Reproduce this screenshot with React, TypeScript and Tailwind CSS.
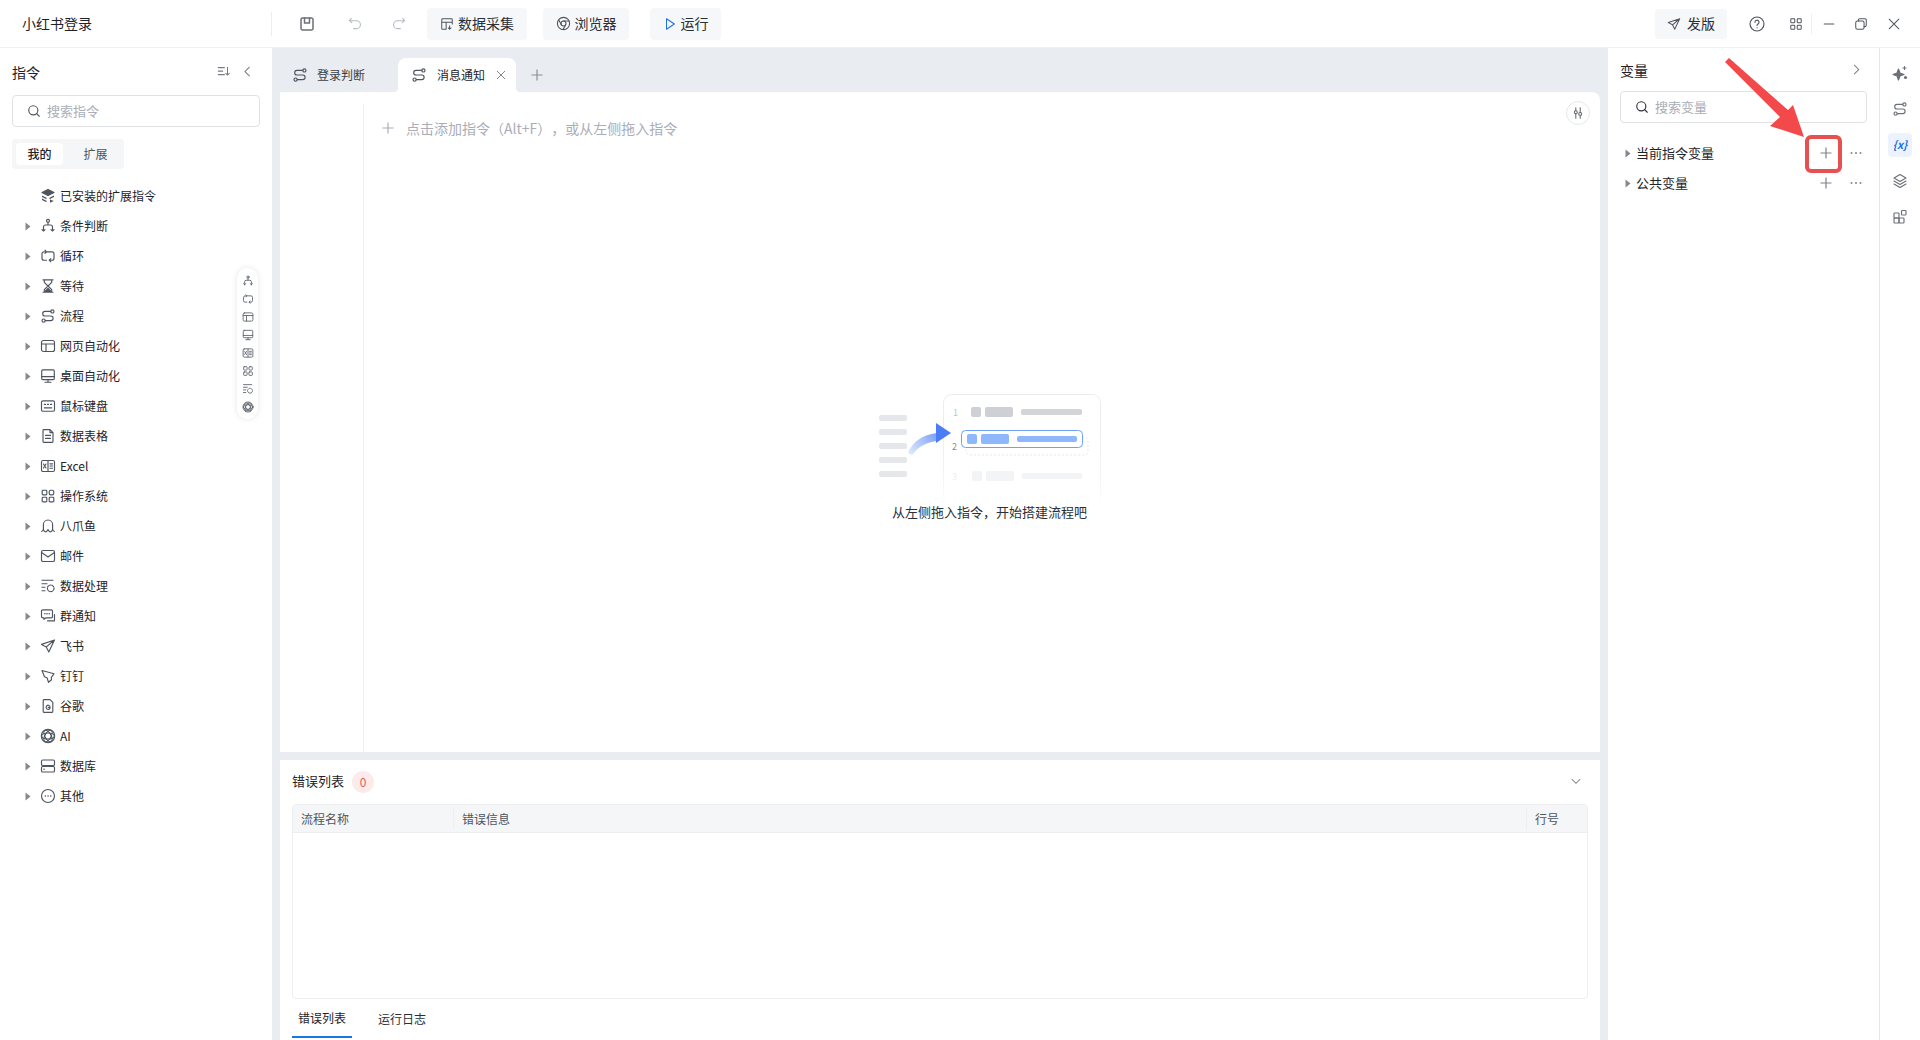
import React from "react";

const Ic = ({ children, s = 16, c = "" }: { children: React.ReactNode; s?: number; c?: string }) => (
  <svg width={s} height={s} viewBox="0 0 16 16" fill="none" stroke="currentColor" strokeWidth={1.15} strokeLinecap="round" strokeLinejoin="round" className={c}>
    {children}
  </svg>
);

const Branch = (p: { s?: number }) => (
  <Ic {...p}><circle cx="8" cy="2.800" r="1.500" /><path d="M8 4.300V7M3.500 13V9a2 2 0 0 1 2-2h5a2 2 0 0 1 2 2v4M2 11.600 3.500 13 5 11.600M11 11.600l1.500 1.400 1.500-1.400" /></Ic>
);
const Loop = (p: { s?: number }) => (
  <Ic {...p}><path d="M5 3.800h7a2 2 0 0 1 2 2v4.400a2 2 0 0 1-2 2h-2M6.500 12.200H4a2 2 0 0 1-2-2V5.800a2 2 0 0 1 2-2M10.800 10.600 9.200 12.200l1.600 1.600M5 2.200l1.600 1.600L5 5.400" /></Ic>
);
const Hourglass = (p: { s?: number }) => (
  <Ic {...p}><path d="M3 1.800h10M3 14.200h10M4.300 1.800v2.600L8 8l3.700 3.600v2.600M11.700 1.800v2.600L8 8l-3.700 3.600v2.600" /><path d="M5 13.500 8 10.500l3 3z" fill="currentColor" /></Ic>
);
const Route = (p: { s?: number }) => (
  <Ic {...p}><circle cx="3.600" cy="12.600" r="1.600" /><circle cx="12.400" cy="3.400" r="1.600" /><path d="M5.200 12.600h5.600a2.300 2.300 0 0 0 0-4.600H5a2.300 2.300 0 0 1 0-4.600h5.800" /></Ic>
);
const Web = (p: { s?: number }) => (
  <Ic {...p}><rect x="1.500" y="2.500" width="13" height="11" rx="2" /><path d="M1.500 6h13M6 6v7.500" /></Ic>
);
const Desktop = (p: { s?: number }) => (
  <Ic {...p}><rect x="1.700" y="1.800" width="12.600" height="9.800" rx="1.200" /><path d="M1.700 8.600h12.600M8 11.600v2.600M5 14.200h6" /></Ic>
);
const Keyboard = (p: { s?: number }) => (
  <Ic {...p}><rect x="1.500" y="2.800" width="13" height="10.400" rx="1.500" /><path d="M4.300 6.400h1.200M7.400 6.400h1.200M10.500 6.400h1.200M4.300 9.800h7.400" /></Ic>
);
const Doc = (p: { s?: number }) => (
  <Ic {...p}><path d="M3 2.400a.8.800 0 0 1 .8-.8H10l3 3v9a.8.800 0 0 1-.8.8H3.800a.8.800 0 0 1-.8-.8zM10 1.600v3h3M5.500 7.400h5M5.500 10.400h5" /></Ic>
);
const ExcelI = (p: { s?: number }) => (
  <Ic {...p}><rect x="1.500" y="2.500" width="13" height="11" rx="1.500" /><path d="M8 2.500v11M10 5.800h2.500M10 8h2.500M10 10.200h2.500M3.500 6l2.500 4M6 6l-2.500 4" /></Ic>
);
const Grid = (p: { s?: number }) => (
  <Ic {...p}><rect x="2.200" y="2.200" width="4.600" height="4.600" rx=".8" /><rect x="9.200" y="2.200" width="4.600" height="4.600" rx="1.600" /><rect x="2.200" y="9.200" width="4.600" height="4.600" rx=".8" /><rect x="9.200" y="9.200" width="4.600" height="4.600" rx=".8" /></Ic>
);
const Octopus = (p: { s?: number }) => (
  <Ic {...p}><path d="M3.400 11V6.600a4.600 4.600 0 0 1 9.200 0V11M1.500 13.500c1 0 1.600-.9 1.900-2.500.3 1.600 1 2.800 2.200 2.800S7.500 12.700 8 11.500c.5 1.200 1.200 2.300 2.400 2.300s1.900-1.200 2.200-2.800c.3 1.600.9 2.500 1.900 2.500" /></Ic>
);
const Mail = (p: { s?: number }) => (
  <Ic {...p}><rect x="1.500" y="2.500" width="13" height="11" rx="1.600" /><path d="M2 4.800 8 9l6-4.200" /></Ic>
);
const DataProc = (p: { s?: number }) => (
  <Ic {...p}><path d="M2 2.200h11M2 5.700h5M2 9.200h3M2 12.700h3" /><circle cx="10.700" cy="10.300" r="3.300" strokeDasharray="1.700 1.100" /></Ic>
);
const Chat = (p: { s?: number }) => (
  <Ic {...p}><path d="M2.800 1.800h8.400a1.300 1.300 0 0 1 1.300 1.300v5.400a1.300 1.300 0 0 1-1.300 1.300H6L4 11.400V9.800H2.800a1.300 1.300 0 0 1-1.300-1.300V3.100a1.300 1.300 0 0 1 1.300-1.300zM14.500 6.500v6.300H7.500" /><path d="M4.800 5.800h.1M7 5.800h.1M9.200 5.800h.1" strokeWidth="1.500" /></Ic>
);
const Send = (p: { s?: number }) => (
  <Ic {...p}><path d="M14.500 2 1.500 6.400l4.800 2.500 2.500 5.100zM6.300 8.900 14.500 2" /></Ic>
);
const Ding = (p: { s?: number }) => (
  <Ic {...p}><path d="M2 2.500 14 5.800l-2.700 3.500.2 2.500-3 2.500-1.500-4.500L4.500 8.700z" /></Ic>
);
const Google = (p: { s?: number }) => (
  <Ic {...p}><path d="M3.200 2.400a.8.800 0 0 1 .8-.8h6l2.800 2.800v9.200a.8.800 0 0 1-.8.8H4a.8.800 0 0 1-.8-.8z" /><path d="M10 8.200a2.100 2.100 0 1 0 0 2.200V9.300H8.300" /></Ic>
);
const AI = (p: { s?: number }) => (
  <Ic {...p}><circle cx="8" cy="8" r="6.700" /><ellipse cx="8" cy="8" rx="6.300" ry="3" /><ellipse cx="8" cy="8" rx="6.300" ry="3" transform="rotate(60 8 8)" /><ellipse cx="8" cy="8" rx="6.300" ry="3" transform="rotate(120 8 8)" /></Ic>
);
const DB = (p: { s?: number }) => (
  <Ic {...p}><rect x="1.500" y="2" width="13" height="5.500" rx="1.300" /><rect x="1.500" y="8.500" width="13" height="5.500" rx="1.300" /><path d="M4 11.200h.1" strokeWidth="1.500" /></Ic>
);
const Other = (p: { s?: number }) => (
  <Ic {...p}><circle cx="8" cy="8" r="6.500" /><path d="M5.300 8h.1M8 8h.1M10.700 8h.1" strokeWidth="1.500" /></Ic>
);
const Stack = (p: { s?: number }) => (
  <Ic {...p}><path d="M8 1.500 14 4.500 8 7.500 2 4.500z" fill="currentColor" /><path d="M2 7.500l4.500 2.200v1.500L2 9zM14 7.500 9.500 9.700v1.500L14 9zM2 10.500l4.500 2.200v1.500L2 12zM10 11.500l3.800 1.500L10 14.700z" fill="currentColor" stroke="none" /></Ic>
);
const Search = () => (
  <Ic s={14}><circle cx="7.200" cy="7.200" r="5.200" strokeWidth="1.300" /><path d="m11 11 3 3" strokeWidth="1.300" /></Ic>
);
const Caret = () => (
  <svg width="6" height="9" viewBox="0 0 6 9" className="shrink-0"><path d="M0.500 0.500 5.500 4.500 0.500 8.500z" fill="#85898f" /></svg>
);
const Plus = ({ c = "#7d828b", s = 12 }: { c?: string; s?: number }) => (
  <svg width={s} height={s} viewBox="0 0 12 12" stroke={c} strokeWidth="1.200" fill="none"><path d="M6 .5v11M.5 6h11" /></svg>
);
const Dots = () => (
  <svg width="12" height="4" viewBox="0 0 12 4" fill="#80858e"><circle cx="1.500" cy="2" r="1" /><circle cx="6" cy="2" r="1" /><circle cx="10.500" cy="2" r="1" /></svg>
);

const rows: [string, (p: { s?: number }) => React.ReactElement][] = [
  ["条件判断", Branch], ["循环", Loop], ["等待", Hourglass], ["流程", Route], ["网页自动化", Web], ["桌面自动化", Desktop],
  ["鼠标键盘", Keyboard], ["数据表格", Doc], ["Excel", ExcelI], ["操作系统", Grid], ["八爪鱼", Octopus], ["邮件", Mail],
  ["数据处理", DataProc], ["群通知", Chat], ["飞书", Send], ["钉钉", Ding], ["谷歌", Google], ["AI", AI], ["数据库", DB], ["其他", Other],
];

const ToolBtn = ({ children, w }: { children: React.ReactNode; w: string }) => (
  <button className={`h-8 ${w} rounded bg-[#f6f7f9] flex items-center justify-center gap-1 text-sm text-[#2b2f36]`}>{children}</button>
);

function Illustration() {
  return (
    <svg width="226" height="112" viewBox="876 392 226 112" className="block">
      <defs>
        <linearGradient id="cardFade" x1="0" y1="0" x2="0" y2="1">
          <stop offset="0" stopColor="#e9ebee" />
          <stop offset="0.7" stopColor="#f1f2f4" />
          <stop offset="1" stopColor="#ffffff" />
        </linearGradient>
        <linearGradient id="arrowFade" x1="908" y1="452" x2="940" y2="432" gradientUnits="userSpaceOnUse">
          <stop offset="0" stopColor="#dfe9fd" />
          <stop offset="1" stopColor="#6f98f6" />
        </linearGradient>
      </defs>
      {[415, 429, 443, 457, 471].map((y) => (
        <rect key={y} x="879" y={y} width="28" height="6" rx="2" fill="#e6e7ea" />
      ))}
      <rect x="943.500" y="394.500" width="157" height="112" rx="8" fill="#fff" stroke="url(#cardFade)" />
      <text x="953" y="416" fontSize="9" fill="#c3c6cc">1</text>
      <rect x="971" y="407" width="10" height="10" rx="2" fill="#ced0d5" />
      <rect x="985" y="407" width="28" height="10" rx="2" fill="#ced0d5" />
      <rect x="1021" y="409" width="61" height="6" rx="2" fill="#d2d4d8" />
      <rect x="966" y="437" width="122" height="18" rx="4" fill="none" stroke="#e3e5e9" strokeDasharray="2 2" />
      <text x="952" y="450" fontSize="9" fill="#8a8e96">2</text>
      <rect x="961.500" y="430.500" width="121" height="17" rx="4" fill="#fff" stroke="#6ea1f7" />
      <rect x="967" y="434" width="10" height="10" rx="2" fill="#8fb7fb" />
      <rect x="981" y="434" width="28" height="10" rx="2" fill="#8fb7fb" />
      <rect x="1017" y="436" width="60" height="6" rx="2" fill="#8fb7fb" />
      <text x="952" y="480" fontSize="9" fill="#eceef0">3</text>
      <rect x="972" y="471" width="10" height="10" rx="2" fill="#f3f4f5" />
      <rect x="986" y="471" width="28" height="10" rx="2" fill="#f3f4f5" />
      <rect x="1022" y="473" width="60" height="6" rx="2" fill="#f3f4f5" />
      <path d="M908 453c4-10 13-18 29-20l1 8c-12 1-20 6-26 14z" fill="url(#arrowFade)" />
      <path d="M936 423 951 433 936 443z" fill="#4a7cf5" />
    </svg>
  );
}

export default function App() {
  return (
    <div className="relative w-[1920px] h-[1040px] overflow-hidden flex flex-col bg-[#e9ecf0] text-[#1f2329] [text-spacing-trim:space-all] font-['Noto_Sans_CJK_SC','Noto_Sans',sans-serif]">
      {/* top bar */}
      <header className="h-12 shrink-0 bg-white border-b border-[#eef0f2] flex items-center">
        <div className="w-[272px] h-6 shrink-0 border-r border-[#eceef1] pl-[22px] text-sm leading-[22px]">小红书登录</div>
        <span className="ml-[27px] text-[#6b6f76]"><Ic s={16}><path d="M3.500 2h9A1.500 1.500 0 0 1 14 3.500v9a1.500 1.500 0 0 1-1.500 1.500h-9A1.500 1.500 0 0 1 2 12.500v-9A1.500 1.500 0 0 1 3.500 2z" strokeWidth="1.500" /><path d="M5.500 2v5h5V2" strokeWidth="1.500" /></Ic></span>
        <span className="ml-[33px] text-[#b7bbc2]"><Ic s={15}><path d="M3.500 2.500 1.500 5l2.500 2M1.800 5H9a4 4 0 0 1 0 8.500H6" /></Ic></span>
        <span className="ml-[28px] text-[#b7bbc2]"><Ic s={15}><path d="M12.500 2.500 14.500 5 12 7M14.200 5H7a4 4 0 0 0 0 8.500h3" /></Ic></span>
        <div className="ml-[21px] flex gap-0 items-center">
          <ToolBtn w="w-[100px]"><span className="text-[#4e5560]"><Ic s={14}><path d="M7 14H3a1 1 0 0 1-1-1V3a1 1 0 0 1 1-1h10a1 1 0 0 1 1 1v5M2 6h12M7 6v8M11 10v4M9.500 12.500 11 14l1.500-1.500" /></Ic></span><span className="-translate-y-px">数据采集</span></ToolBtn>
          <div className="w-4" />
          <ToolBtn w="w-[86px]"><span className="text-[#4e5560]"><Ic s={15}><circle cx="8" cy="8" r="6.500" /><circle cx="8" cy="8" r="2.600" /><path d="M8 5.400h6M5.800 9.500 3 4.200M10.200 9.500 7.500 14.400" /></Ic></span><span className="-translate-y-px">浏览器</span></ToolBtn>
          <div className="w-[21px]" />
          <ToolBtn w="w-[71px]"><span className="text-[#1f6fe5]"><Ic s={14}><path d="M4 2 13 8l-9 6z" /></Ic></span><span className="-translate-y-px">运行</span></ToolBtn>
        </div>
        <div className="ml-auto flex items-center text-[#4e5560]">
          <button className="h-[30px] w-[72px] rounded bg-[#f6f7f9] flex items-center justify-center gap-[6px] text-sm text-[#2b2f36]"><span className="text-[#4e5560]"><Ic s={14}><path d="M14.500 2 1.500 6.400l4.800 2.500 2.500 5.100zM6.300 8.900 14.500 2" /></Ic></span><span className="-translate-y-px">发版</span></button>
          <span className="ml-[22px]"><Ic s={16}><circle cx="8" cy="8" r="7" /><path d="M6 6.200a2 2 0 1 1 3 1.700c-.7.400-1 .8-1 1.600M8 11.800h.1" /></Ic></span>
          <span className="ml-[24px]"><Ic s={14}><rect x="2" y="2" width="4.600" height="4.600" rx="1" /><rect x="9.400" y="2" width="4.600" height="4.600" rx="1" /><rect x="2" y="9.400" width="4.600" height="4.600" rx="1" /><rect x="9.400" y="9.400" width="4.600" height="4.600" rx="1" /></Ic></span>
          <span className="ml-[8px] h-5 border-l border-[#eceef1]" />
          <span className="ml-[10px]"><Ic s={14}><path d="M2.500 8h11" /></Ic></span>
          <span className="ml-[18px]"><Ic s={14}><rect x="2" y="4.500" width="9.500" height="9.500" rx="2" /><path d="M5 4.500V3.500a1.500 1.500 0 0 1 1.500-1.500h6A1.500 1.500 0 0 1 14 3.500v6a1.500 1.500 0 0 1-1.500 1.500h-1" /></Ic></span>
          <span className="ml-[19px] mr-[19px]"><Ic s={14}><path d="m2.500 2.500 11 11M13.500 2.500l-11 11" /></Ic></span>
        </div>
      </header>

      <div className="flex-1 flex min-h-0">
        {/* left panel */}
        <aside className="relative w-[272px] shrink-0 bg-white">
          <div className="h-[47px] px-3 flex items-center text-sm">
            <span className="flex-1">指令</span>
            <span className="text-[#777c85] mr-[10px]"><Ic s={14}><path d="M1.500 3h7M1.500 7h5M1.500 11h7M12 2.500v9M10 9.500l2 2 2-2" /></Ic></span>
            <span className="text-[#777c85] mr-[5px]"><Ic s={14}><path d="M9.500 2.500 4.500 7.500l5 5" /></Ic></span>
          </div>
          <div className="mx-3 h-8 w-[248px] rounded border border-[#dfe1e5] flex items-center pl-[14px] gap-[6px] text-[13px] text-[#a9aeb8]">
            <span className="text-[#4e5560]"><Search /></span>搜索指令
          </div>
          <div className="mx-3 mt-3 w-[112px] h-[30px] rounded bg-[#f5f6f7] p-1 flex text-xs">
            <div className="w-12 h-[22px] rounded bg-white flex items-center justify-center font-medium">我的</div>
            <div className="w-[58px] flex items-center justify-center text-[#4e5560] pl-[8px]">扩展</div>
          </div>
          <div className="mt-3 text-xs">
            <div className="h-[30px] flex items-center pl-10 text-[#4e5560]"><Stack /><span className="ml-[4px] text-[#1f2329]">已安装的扩展指令</span></div>
            {rows.map(([name, I]) => (
              <div key={name} className="h-[30px] flex items-center text-[#4e5560]">
                <span className="ml-[25px] w-[15px] flex"><Caret /></span>
                <I s={16} />
                <span className="ml-[4px] text-[#1f2329]">{name}</span>
              </div>
            ))}
          </div>
          <div className="absolute left-[237px] top-[220px] w-[21px] h-[151px] rounded-full bg-white shadow-[0_0_6px_rgba(0,0,0,0.1)] flex flex-col items-center justify-between pt-[7px] pb-[6px] text-[#5a5f69]">
            {[Branch, Loop, Web, Desktop, ExcelI, Grid, DataProc, AI].map((I, i) => (
              <I key={i} s={12} />
            ))}
          </div>
        </aside>

        {/* center */}
        <main className="ml-2 w-[1320px] shrink-0 flex flex-col">
          <div className="h-[44px] shrink-0 flex items-end text-xs">
            <div className="w-[118px] h-[34px] flex items-center pl-[12px] text-[#4e5560]"><Route /><span className="ml-[9px] text-[#3a3f47]">登录判断</span></div>
            <div className="relative w-[118px] h-[34px] rounded-t-lg bg-white flex items-center pl-[13px] text-[#4e5560]">
              <Route /><span className="ml-[10px] text-[#1f2329]">消息通知</span>
              <span className="ml-[10px] text-[#6e737c]"><Ic s={12}><path d="m3 3 10 10M13 3 3 13" /></Ic></span>
              <span className="absolute -left-1 bottom-0 w-1 h-1 bg-[radial-gradient(circle_at_0_0,transparent_4px,white_4px)]" />
              <span className="absolute -right-1 bottom-0 w-1 h-1 bg-[radial-gradient(circle_at_100%_0,transparent_4px,white_4px)]" />
            </div>
            <div className="h-[34px] ml-[15px] flex items-center"><Plus c="#8a8f98" /></div>
          </div>
          <section className="relative h-[660px] shrink-0 bg-white rounded-tr-lg flex">
            <div className="w-[84px] mt-3 border-r border-[#eceef1] shrink-0" />
            <div className="flex-1 flex flex-col">
              <div className="pt-[28px] pl-[18px] flex items-center text-sm text-[#a9aeb8] leading-4">
                <Plus c="#a9aeb8" />
                <span className="ml-[12px]">{"点击添加指令\uFF08Alt+F\uFF09\uFF0C或从左侧拖入指令"}</span>
              </div>
              <div className="mt-[256px] ml-[512px] w-[226px]"><Illustration /></div>
              <div className="ml-[528px] w-[195px] text-[13px] text-[#2b2f36] whitespace-nowrap leading-[15px]">{"从左侧拖入指令\uFF0C开始搭建流程吧"}</div>
            </div>
            <div className="absolute right-[10px] top-[9px] w-6 h-6 rounded-full bg-white border border-[#e6e8eb] flex items-center justify-center text-[#5a5f69]">
              <Ic s={14}><path d="M5.500 2v3M5.500 9v5M10.500 2v5M10.500 11v3" /><circle cx="5.500" cy="7" r="1.700" /><circle cx="10.500" cy="9" r="1.700" /></Ic>
            </div>
          </section>
          <section className="mt-2 flex-1 bg-white flex flex-col">
            <div className="h-[44px] shrink-0 pl-3 pr-[17px] flex items-center">
              <span className="text-[13px] -translate-y-px">错误列表</span>
              <span className="ml-2 w-[22px] h-[22px] rounded-full bg-[#fdeaea] text-[#e35d5d] text-xs flex items-center justify-center">0</span>
              <span className="ml-auto text-[#8a8f98]"><Ic s={14}><path d="m2.500 5 4.500 4.500L11.500 5" transform="translate(1 0)" /></Ic></span>
            </div>
            <div className="mx-3 h-[195px] shrink-0 rounded border border-[#eceef1] flex flex-col text-xs">
              <div className="h-[28px] shrink-0 bg-[#f5f6f7] border-b border-[#eceef1] flex items-center text-[#4e5560] rounded-t">
                <div className="w-[161px] h-5 pl-2 leading-5 border-r border-[#eceef1]">流程名称</div>
                <div className="flex-1 h-5 pl-2 leading-5 border-r border-[#eceef1]">错误信息</div>
                <div className="w-[60px] pl-2 leading-5">行号</div>
              </div>
            </div>
            <div className="flex-1 mx-3 flex items-start text-xs relative">
              <div className="w-[60px] h-[39px] border-b-2 border-[#1677e6] flex items-center justify-center">错误列表</div>
              <div className="ml-[26px] h-[39px] flex items-center text-[#2b2f36]">运行日志</div>
            </div>
          </section>
        </main>

        {/* right panel */}
        <aside className="ml-2 w-[272px] shrink-0 bg-white border-r border-[#e3e5e8]">
          <div className="h-[43px] pl-3 pr-[15px] flex items-center text-sm">
            <span className="flex-1">变量</span>
            <span className="text-[#7d828b]"><Ic s={14}><path d="m5 2.500 5 5-5 5" /></Ic></span>
          </div>
          <div className="ml-3 w-[247px] h-8 rounded border border-[#dfe1e5] flex items-center pl-[14px] gap-[6px] text-[13px] text-[#a9aeb8]">
            <span className="text-[#2b2f36]"><Search /></span>搜索变量
          </div>
          <div className="mt-[15px] text-[13px]">
            {["当前指令变量", "公共变量"].map((t) => (
              <div key={t} className="h-[30px] flex items-center pl-[17px]">
                <Caret />
                <span className="ml-[5px] flex-1">{t}</span>
                <span className="mr-[18px] flex"><Plus /></span>
                <span className="mr-[17px] flex"><Dots /></span>
              </div>
            ))}
          </div>
        </aside>

        {/* right rail */}
        <nav className="w-10 shrink-0 bg-white flex flex-col items-center pt-[13px] gap-3 text-[#6b7079]">
          <div className="h-6 flex items-center"><Ic s={16}><path d="M6.500 4 8 8l4 1.500L8 11l-1.500 4L5 11 1 9.500 5 8z" fill="currentColor" /><path d="M12.500 1.500v3M11 3h3" /><circle cx="13.500" cy="12.500" r="1.600" fill="currentColor" stroke="none" /></Ic></div>
          <div className="h-6 flex items-center"><Route /></div>
          <div className="w-6 h-6 rounded bg-[#edf3fe] flex items-center justify-center text-[#1f6fe5] text-[11px] font-bold italic pb-px">{"{x}"}</div>
          <div className="h-6 flex items-center"><Ic s={16}><path d="M8 1.500 14 5 8 8.500 2 5zM2 8l6 3.500L14 8M2 11l6 3.500 6-3.500" /></Ic></div>
          <div className="h-6 flex items-center"><Ic s={16}><rect x="2" y="4" width="5" height="5" rx=".8" /><rect x="2" y="9" width="5" height="5" rx=".8" /><rect x="7" y="9" width="5" height="5" rx=".8" /><rect x="9.500" y="1.500" width="4.500" height="4.500" rx=".8" /></Ic></div>
        </nav>
      </div>

      {/* annotation: red arrow + highlight box */}
      <div className="absolute left-[1805px] top-[135px] w-[37px] h-[38px] rounded-md border-4 border-[#e85050]" />
      <svg className="absolute left-[1720px] top-[55px]" width="90" height="90" viewBox="0 0 90 90">
        <path d="M5 7 9 3 68 55 73 50 84 82 50 71 60 62z" fill="#f4494a" />
      </svg>
    </div>
  );
}
